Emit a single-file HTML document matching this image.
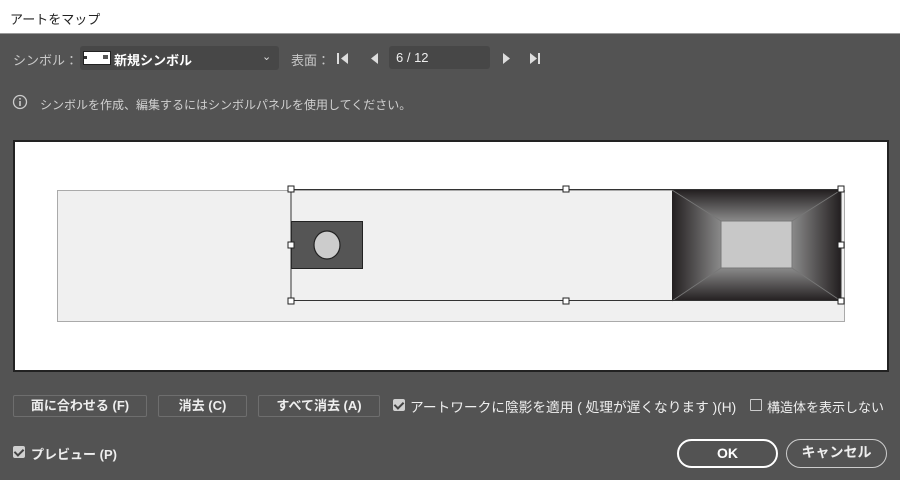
<!DOCTYPE html>
<html><head><meta charset="utf-8"><style>
*{margin:0;padding:0;box-sizing:border-box}
body{width:900px;height:480px;background:#535353;font-family:"Liberation Sans","Noto Sans CJK JP",sans-serif;color:#e8e8e8;position:relative;overflow:hidden;font-size:13px}
.a{position:absolute;white-space:nowrap}
.title{left:0;top:0;width:900px;height:34px;background:#fff;color:#222;font-size:13px;padding:9px 0 0 10px;border-bottom:1px solid #999}
.btn{position:absolute;border:1px solid #6e6e6e;border-radius:2px;text-align:center;line-height:20px;height:22px;color:#eee;font-weight:bold;font-size:13px}
.cb{position:absolute;width:12px;height:12px;background:#d0d0d0;border-radius:2px}
.cb:after{content:"";position:absolute;left:3px;top:1px;width:4px;height:7px;border:solid #444;border-width:0 2px 2px 0;transform:rotate(45deg)}
.pill{position:absolute;height:29px;border-radius:15px;text-align:center;line-height:25px;font-weight:bold;font-size:14px;color:#fff}
</style></head><body>
<div class="a title">アートをマップ</div>
<div class="a" style="left:13px;top:50px;color:#c8c8c8">シンボル：</div>
<div class="a" style="left:80px;top:46px;width:199px;height:24px;background:#474747;border-radius:3px"></div>
<div class="a" style="left:83px;top:51px;width:28px;height:14px;background:#fff;border:1px solid #222"></div>
<div class="a" style="left:84px;top:56px;width:3px;height:3px;background:#333"></div>
<div class="a" style="left:103px;top:55px;width:5px;height:4px;background:#555"></div>
<div class="a" style="left:114px;top:50px;color:#fff;font-weight:bold">新規シンボル</div>
<div class="a" style="left:262px;top:50px;color:#ddd;font-size:11px">&#8964;</div>
<div class="a" style="left:291px;top:50px;color:#c8c8c8">表面：</div>
<svg class="a" style="left:335px;top:51px" width="215" height="16">
<rect x="2" y="2" width="2" height="11" fill="#ddd"/><polygon points="13,2 13,13 6,7.5" fill="#ddd"/>
<polygon points="43,2 43,13 36,7.5" fill="#ddd"/>
<polygon points="168,2 168,13 175,7.5" fill="#ddd"/>
<polygon points="195,2 195,13 202,7.5" fill="#ddd"/><rect x="203" y="2" width="2" height="11" fill="#ddd"/>
</svg>
<div class="a" style="left:389px;top:46px;width:101px;height:23px;background:#474747;border-radius:3px"></div>
<div class="a" style="left:396px;top:50px;color:#eee">6 / 12</div>
<svg class="a" style="left:12px;top:94px" width="16" height="16"><circle cx="8" cy="8" r="6.5" fill="none" stroke="#ccc" stroke-width="1.3"/><rect x="7.2" y="7" width="1.6" height="5" fill="#ccc"/><rect x="7.2" y="4" width="1.6" height="1.6" fill="#ccc"/></svg>
<div class="a" style="left:40px;top:96px;color:#d0d0d0;font-size:12px">シンボルを作成、編集するにはシンボルパネルを使用してください。</div>
<svg class="a" style="left:13px;top:140px" width="876" height="232">
<rect x="1" y="1" width="874" height="230" fill="#fff" stroke="#222" stroke-width="2"/>
<rect x="44.5" y="50.5" width="787" height="131" fill="#f0f0f0" stroke="#aaa"/>
<defs>
<linearGradient id="t" x1="0" y1="0" x2="0" y2="1"><stop offset="0" stop-color="#231f20"/><stop offset="1" stop-color="#8a8a8a"/></linearGradient>
<linearGradient id="b" x1="0" y1="1" x2="0" y2="0"><stop offset="0" stop-color="#231f20"/><stop offset="1" stop-color="#8a8a8a"/></linearGradient>
<linearGradient id="l" x1="0" y1="0" x2="1" y2="0"><stop offset="0" stop-color="#231f20"/><stop offset="1" stop-color="#8a8a8a"/></linearGradient>
<linearGradient id="r" x1="1" y1="0" x2="0" y2="0"><stop offset="0" stop-color="#231f20"/><stop offset="1" stop-color="#8a8a8a"/></linearGradient>
</defs>
<g transform="translate(659,50)">
<polygon points="0,0 169,0 120,31 49,31" fill="url(#t)"/>
<polygon points="0,111 169,111 120,78 49,78" fill="url(#b)"/>
<polygon points="0,0 49,31 49,78 0,111" fill="url(#l)"/>
<polygon points="169,0 120,31 120,78 169,111" fill="url(#r)"/>
<rect x="49" y="31" width="71" height="47" fill="#c8c8c8" stroke="#777"/>
<g stroke="#777" stroke-width="0.8"><line x1="0" y1="0" x2="49" y2="31"/><line x1="169" y1="0" x2="120" y2="31"/><line x1="0" y1="111" x2="49" y2="78"/><line x1="169" y1="111" x2="120" y2="78"/></g>
</g>
<rect x="278.5" y="81.5" width="71" height="47" fill="#555" stroke="#222"/>
<ellipse cx="314" cy="105" rx="13" ry="14" fill="#ccc" stroke="#222" stroke-width="1.2"/>
<rect x="278" y="49.5" width="550" height="111" fill="none" stroke="#333" stroke-width="1"/>
<g fill="#fff" stroke="#222" stroke-width="1">
<rect x="275" y="46" width="6" height="6"/><rect x="550" y="46" width="6" height="6"/><rect x="825" y="46" width="6" height="6"/>
<rect x="275" y="102" width="6" height="6"/><rect x="825" y="102" width="6" height="6"/>
<rect x="275" y="158" width="6" height="6"/><rect x="550" y="158" width="6" height="6"/><rect x="825" y="158" width="6" height="6"/>
</g>
</svg>
<div class="btn" style="left:13px;top:395px;width:134px">面に合わせる (F)</div>
<div class="btn" style="left:158px;top:395px;width:89px">消去 (C)</div>
<div class="btn" style="left:258px;top:395px;width:122px">すべて消去 (A)</div>
<div class="cb" style="left:393px;top:399px"></div>
<div class="a" style="left:410px;top:396px;color:#eee;font-size:13.7px">アートワークに陰影を適用 ( 処理が遅くなります )(H)</div>
<div class="a" style="left:750px;top:399px;width:12px;height:12px;border:1px solid #ccc;border-radius:1px"></div>
<div class="a" style="left:767px;top:397px;color:#eee;font-size:13px">構造体を表示しない</div>
<div class="cb" style="left:13px;top:446px"></div>
<div class="a" style="left:31px;top:444px;color:#eee;font-weight:bold">プレビュー (P)</div>
<div class="pill" style="left:677px;top:439px;width:101px;border:2px solid #fff">OK</div>
<div class="pill" style="left:786px;top:439px;width:101px;border:1.5px solid #ccc;color:#eee">キャンセル</div>
</body></html>
